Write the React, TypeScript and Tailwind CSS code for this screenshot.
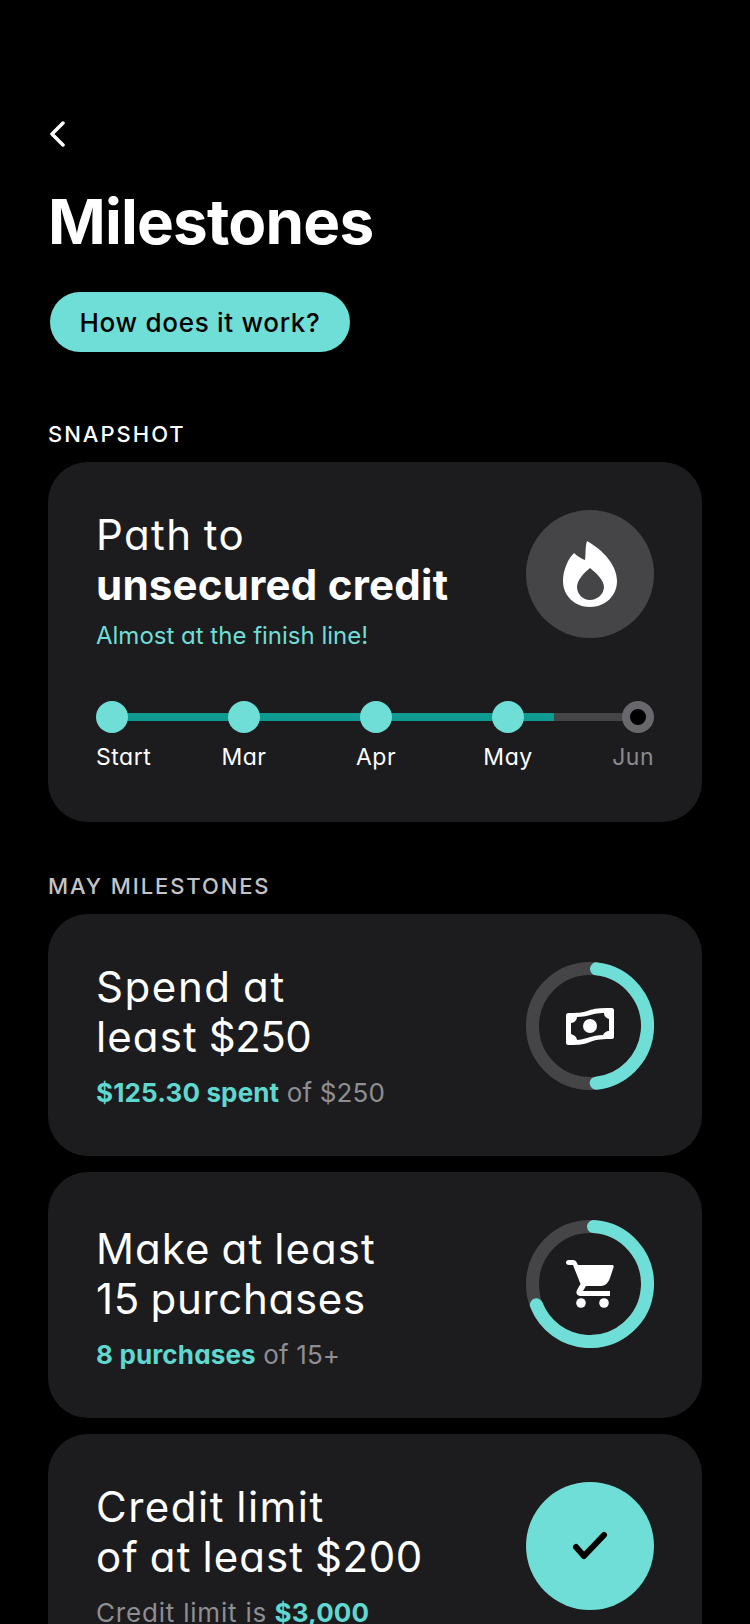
const teal = '#6fded6'

function Ring({ progress, start, children }: { progress: number; start: number; children: React.ReactNode }) {
  const r = 57.5
  const len = 2 * Math.PI * r
  return (
    <div className="relative w-[128px] h-[128px] shrink-0 flex items-center justify-center">
      <svg className="absolute inset-0" width="128" height="128" viewBox="0 0 128 128">
        <circle cx="64" cy="64" r={r} fill="none" stroke="#454547" strokeWidth="13" />
        <circle
          cx="64"
          cy="64"
          r={r}
          fill="none"
          stroke={teal}
          strokeWidth="13"
          strokeLinecap="round"
          strokeDasharray={`${len * progress} ${len}`}
          transform={`rotate(${start - 90} 64 64)`}
        />
      </svg>
      {children}
    </div>
  )
}

function Flame() {
  return (
    <svg width="54" height="66" viewBox="0 0 54 66">
      <path
        fillRule="evenodd"
        fill="#fff"
        d="M24 0C40 9 54 24 54 40C54 55 42 66 27 66C12 66 0 55 0 40C0 29 5 18 11 12C14 15 19 18 22 19C23 13 22 6 24 0ZM27 27C21 32 14 39 14 46C14 53 20 59 27 59C34 59 41 53 41 46C41 39 33 32 27 27Z"
      />
    </svg>
  )
}

function Money() {
  return (
    <svg width="48" height="38" viewBox="0 0 48 38">
      <path
        fill="#fff"
        d="M2 6C10 6 17 6 24 3C31 1 38 1 46 1C47 1 48 2 48 3V30C48 31 47 32 46 32C38 32 31 32 24 35C17 38 10 38 2 38C1 38 0 37 0 36V8C0 7 1 6 2 6Z"
      />
      <path
        fill="#1c1c1e"
        d="M11 10C16 10 22 9 28 7C32 6 36 6 38 6C38 9 40 11 43 12V24C40 24 38 26 37 28C32 28 27 29 21 31C17 32 13 33 11 33C11 30 8 28 5 27V16C8 16 11 13 11 10Z"
      />
      <circle cx="24" cy="19" r="7" fill="#fff" />
    </svg>
  )
}

function Cart() {
  return (
    <svg width="48" height="48" viewBox="0 0 48 48">
      <path
        fill="#fff"
        d="M3 0H7C9 0 10 1 11 3L12 5H46C47.500 5 48 6 47.500 7.500L44 18C42 23 40 25.500 35 26H20L17 31H44V36H14C11 36 9.500 33 11 30L14.500 24L7 5H3C-1 5 -1 0 3 0Z"
      />
      <circle cx="15" cy="43" r="4.800" fill="#fff" />
      <circle cx="38" cy="43" r="4.800" fill="#fff" />
    </svg>
  )
}

function Check() {
  return (
    <svg width="36" height="30" viewBox="0 0 36 30">
      <path d="M4 16L12 25L32 4" fill="none" stroke="#000" strokeWidth="6" strokeLinecap="round" strokeLinejoin="round" />
    </svg>
  )
}

function Stop({ label, align, future, className }: { label: string; align: string; future?: boolean; className?: string }) {
  return (
    <div className={`relative w-8 shrink-0 flex flex-col ${align} ${className ?? ''}`}>
      {future ? (
        <div className="w-8 h-8 rounded-full bg-black border-[8px] border-[#68686c]" />
      ) : (
        <div className="w-8 h-8 rounded-full bg-[#6fded6]" />
      )}
      <div className={`mt-[10px] text-[23px] leading-[28px] tracking-[0.5px] whitespace-nowrap ${future ? 'text-[#8a8a8e]' : 'text-white'}`}>{label}</div>
    </div>
  )
}

function MilestoneCard({ title, sub, height, textOffset, children }: { title: React.ReactNode; sub: React.ReactNode; height: string; textOffset?: string; children: React.ReactNode }) {
  return (
    <div className={`${height} shrink-0 rounded-[40px] bg-[#1c1c1e] px-[48px] pt-[48px] flex justify-between`}>
      <div className={textOffset}>
        <div className="text-[42px] leading-[50px] text-white tracking-[1.1px] [word-spacing:-2px]">{title}</div>
        <div className="mt-[15px] text-[26px] leading-[32px] tracking-[0.15px] text-[#8e8e93]">{sub}</div>
      </div>
      {children}
    </div>
  )
}

export default function App() {
  return (
    <div className="h-[1624px] overflow-hidden bg-black px-[48px] pt-[120px] font-['Inter','Liberation_Sans',sans-serif] [font-feature-settings:'cv11']">
      <svg width="16" height="28" viewBox="0 0 16 28" className="ml-[1px]">
        <path d="M14 3L3 14L14 25" fill="none" stroke="#fff" strokeWidth="3.500" strokeLinecap="round" strokeLinejoin="round" />
      </svg>

      <h1 className="mt-[38px] text-[62px] leading-[72px] font-bold text-white tracking-[-0.8px]">Milestones</h1>

      <button className="mt-[34px] ml-[2px] block w-[300px] h-[60px] rounded-full bg-[#6fded6] text-[26px] font-medium tracking-[0.7px] text-black">
        How does it work?
      </button>

      <div className="mt-[68px] text-[22px] leading-[28px] font-medium tracking-[2px] text-white">SNAPSHOT</div>

      <div className="mt-[14px] h-[360px] rounded-[40px] bg-[#1c1c1e] px-[48px] pt-[48px]">
        <div className="flex justify-between">
          <div>
            <div className="text-[42px] leading-[50px] text-white tracking-[1.4px] [word-spacing:-2px]">Path to</div>
            <div className="text-[42px] leading-[50px] font-bold text-white tracking-[0.25px]">unsecured credit</div>
            <div className="mt-[11px] text-[24px] leading-[30px] text-[#6fded6]">Almost at the finish line!</div>
          </div>
          <div className="w-[128px] h-[128px] rounded-full bg-[#454547] flex items-center justify-center">
            <Flame />
          </div>
        </div>

        <div className="relative mt-[50px] flex gap-[100px]">
          <div className="absolute left-[16px] top-[12px] h-2 w-[442px] bg-[#0e9a90]" />
          <div className="absolute left-[458px] top-[12px] h-2 w-[72px] bg-[#454547]" />
          <Stop label="Start" align="items-start" />
          <Stop label="Mar" align="items-center" />
          <Stop label="Apr" align="items-center" />
          <Stop label="May" align="items-center" />
          <Stop label="Jun" align="items-end" future className="-ml-[2px]" />
        </div>
      </div>

      <div className="mt-[50px] text-[22px] leading-[28px] font-medium tracking-[1.9px] text-[#c4c4c6]">MAY MILESTONES</div>

      <div className="mt-[14px] flex flex-col gap-4">
        <MilestoneCard
          height="h-[242px]"
          title={<><span className="tracking-[1.6px]">Spend at</span><br />least <span className="tracking-[-0.5px]">$250</span></>}
          sub={<><span className="font-bold text-[#5fd8d0]">$125.30 spent</span> of $250</>}
        >
          <Ring progress={0.464} start={6.5}>
            <Money />
          </Ring>
        </MilestoneCard>

        <MilestoneCard
          height="h-[246px]"
          textOffset="pt-1"
          title={<>Make at least<br /><span className="tracking-[0.7px]">15 purchases</span></>}
          sub={<><span className="font-bold text-[#5fd8d0]">8 purchases</span> of 15+</>}
        >
          <Ring progress={0.68} start={3.5}>
            <Cart />
          </Ring>
        </MilestoneCard>

        <MilestoneCard
          height="h-[246px]"
          title={<><span className="tracking-[1.5px]">Credit limit</span><br />of at least <span className="tracking-[0.5px]">$200</span></>}
          sub={<><span className="tracking-[0.8px]">Credit limit is</span> <span className="font-bold text-[#5fd8d0]">$3,000</span></>}
        >
          <div className="w-[128px] h-[128px] shrink-0 rounded-full bg-[#6fded6] flex items-center justify-center">
            <Check />
          </div>
        </MilestoneCard>
      </div>
    </div>
  )
}
